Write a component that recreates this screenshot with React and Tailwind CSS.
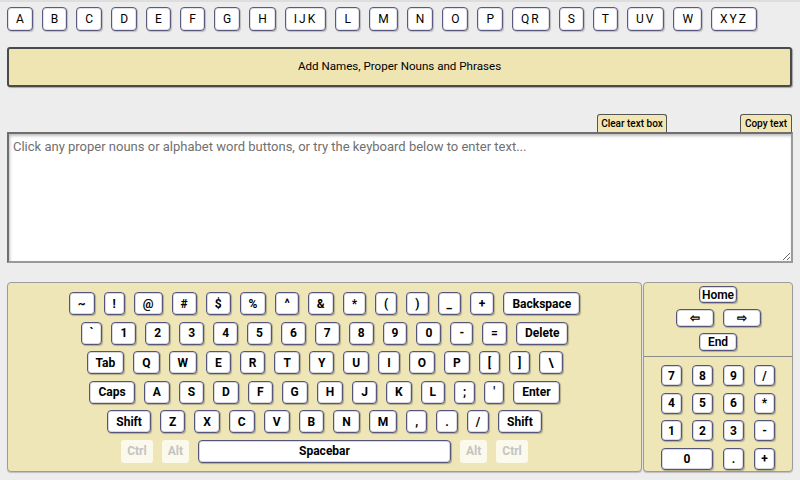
const LETTERS = ['A', 'B', 'C', 'D', 'E', 'F', 'G', 'H', 'IJK', 'L', 'M', 'N', 'O', 'P', 'QR', 'S', 'T', 'UV', 'W', 'XYZ'];

const ROWS = [
    ['~', '!', '@', '#', '$', '%', '^', '&', '*', '(', ')', '_', '+', 'Backspace'],
    ['`', '1', '2', '3', '4', '5', '6', '7', '8', '9', '0', '-', '=', 'Delete'],
    ['Tab', 'Q', 'W', 'E', 'R', 'T', 'Y', 'U', 'I', 'O', 'P', '[', ']', '\\'],
    ['Caps', 'A', 'S', 'D', 'F', 'G', 'H', 'J', 'K', 'L', ';', "'", 'Enter'],
    ['Shift', 'Z', 'X', 'C', 'V', 'B', 'N', 'M', ',', '.', '/', 'Shift'],
];

const NUMPAD = [
    ['7', '8', '9', '/'],
    ['4', '5', '6', '*'],
    ['1', '2', '3', '-'],
];

const keyBase =
    'flex items-center justify-center rounded-[4px] border border-[#55557a] bg-white text-[12px] font-bold text-black shadow-[1px_1px_1px_rgba(0,0,0,0.25),inset_0_0_0_1px_#d8d8e0]';

function Key({ label, className = 'h-[23px] px-2' }) {
    return <div className={`${keyBase} ${className}`}>{label}</div>;
}

function Ghost({ label }) {
    return (
        <div className="flex h-[23px] items-center justify-center rounded-[3px] bg-[#fbf8ec] px-[6px] text-[12px] font-bold text-[#c4c4c4]">
            {label}
        </div>
    );
}

export default function App() {
    return (
        <div className="flex h-[480px] w-[800px] flex-col overflow-hidden border-t-2 border-[#dddddd] bg-[#ededed] px-[7px] pt-[5px] font-['Roboto',sans-serif] text-black">
            {/* alphabet buttons */}
            <div className="flex gap-[9px]">
                {LETTERS.map((l) => (
                    <div
                        key={l}
                        className={`flex h-[24px] min-w-[25px] items-center justify-center rounded-[4px] border border-[#5a5a7e] bg-white px-2 text-[12px] shadow-[1px_1px_1px_rgba(0,0,0,0.2),inset_0_0_0_1px_#e0e0ea] ${l.length > 1 ? 'tracking-[2px]' : ''}`}
                    >
                        {l}
                    </div>
                ))}
            </div>

            <div className="mt-[16px] flex h-[40px] w-[785px] items-center justify-center rounded-[3px] border-2 border-[#4a4a4a] bg-[#efe5b3] text-[11.6px] shadow-[1px_1px_1px_rgba(0,0,0,0.3)]">
                Add Names, Proper Nouns and Phrases
            </div>

            {/* text box tools */}
            <div className="mt-[27px] flex w-[785px] items-end justify-end">
                <div className="flex h-[18px] w-[70px] items-center justify-center rounded-t-[3px] border border-b-0 border-[#555] bg-[#f1e6b4] text-[10px] font-medium">
                    Clear text box
                </div>
                <div className="w-[73px]" />
                <div className="flex h-[18px] w-[52px] items-center justify-center rounded-t-[3px] border border-b-0 border-[#555] bg-[#f1e6b4] text-[10px] font-medium">
                    Copy text
                </div>
            </div>
            <textarea
                readOnly
                placeholder="Click any proper nouns or alphabet word buttons, or try the keyboard below to enter text..."
                className="h-[131px] w-[786px] border-2 border-[#6e6e6e] border-r-[#9a9a9a] border-b-[#9a9a9a] bg-white px-[4px] py-[4px] text-[13px] leading-[18px] shadow-[inset_1px_2px_3px_rgba(0,0,0,0.25)] outline-none placeholder:text-[#707070]"
            />

            {/* keyboard */}
            <div className="mt-[19px] flex h-[190px] gap-[1px]">
                <div className="flex w-[635px] flex-col items-center gap-[6.6px] rounded-[4px] border border-[#9c9c9c] bg-[#efe6b8] pt-[9px] shadow-[0_1px_1px_rgba(0,0,0,0.2)]">
                    {ROWS.map((row, i) => (
                        <div key={i} className="flex gap-[9px]">
                            {row.map((k, j) => (
                                <Key key={j} label={k} />
                            ))}
                        </div>
                    ))}
                    <div className="flex gap-[9px]">
                        <Ghost label="Ctrl" />
                        <Ghost label="Alt" />
                        <Key label="Spacebar" className="h-[23px] w-[253px]" />
                        <Ghost label="Alt" />
                        <Ghost label="Ctrl" />
                    </div>
                </div>

                <div className="flex w-[150px] flex-col rounded-[4px] border border-[#9c9c9c] bg-[#efe6b8] shadow-[0_1px_1px_rgba(0,0,0,0.2)]">
                    <div className="flex h-[74px] flex-col items-center gap-[6px] border-b border-[#8a8a8a] pt-[3px]">
                        <Key label="Home" className="h-[17px] w-[38px] font-semibold" />
                        <div className="flex gap-[9px]">
                            <Key label="⇦" className="h-[18px] w-[38px] text-[10px]" />
                            <Key label="⇨" className="h-[18px] w-[38px] text-[10px]" />
                        </div>
                        <Key label="End" className="h-[18px] w-[38px] font-semibold" />
                    </div>
                    <div className="flex flex-col items-center gap-[6.5px] pt-[8px]">
                        {NUMPAD.map((row, i) => (
                            <div key={i} className="flex gap-[10px]">
                                {row.map((k) => (
                                    <Key key={k} label={k} className="h-[21px] w-[21px]" />
                                ))}
                            </div>
                        ))}
                        <div className="flex gap-[10px]">
                            <Key label="0" className="h-[22px] w-[52px]" />
                            <Key label="." className="h-[22px] w-[21px]" />
                            <Key label="+" className="h-[22px] w-[21px]" />
                        </div>
                    </div>
                </div>
            </div>
        </div>
    );
}
